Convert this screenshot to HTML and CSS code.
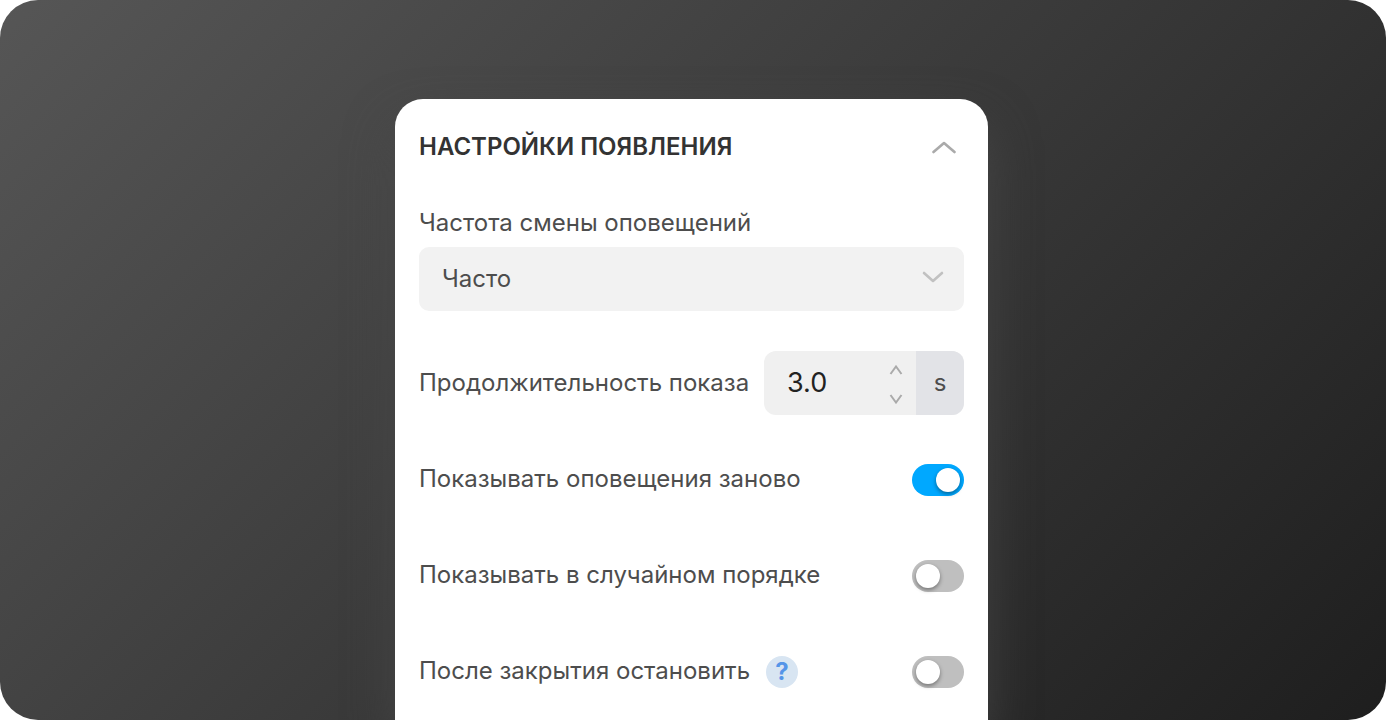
FILE: index.html
```html
<!DOCTYPE html>
<html lang="ru">
<head>
<meta charset="utf-8">
<title>Настройки появления</title>
<link rel="stylesheet" href="styles.css">
</head>
<body>
<main class="stage">
  <form class="card">
    <header class="card-header">
      <h1 class="title">НАСТРОЙКИ ПОЯВЛЕНИЯ</h1>
      <button class="collapse" type="button" aria-label="Свернуть">
        <svg width="24" height="14" viewBox="0 0 24 14"><path d="M1.500 12 12 3 22.500 12"/></svg>
      </button>
    </header>
    <div class="field">
      <label class="label" for="frequency">Частота смены оповещений</label>
      <div class="select-wrap">
        <select class="select" id="frequency"><option>Часто</option></select>
        <svg class="select-arrow" width="22" height="12" viewBox="0 0 22 12"><path d="M2 2 11 10 20 2"/></svg>
      </div>
    </div>
    <div class="row">
      <label class="label" for="duration">Продолжительность показа</label>
      <div class="number">
        <input class="number-input" id="duration" type="text" inputmode="decimal" value="3.0">
        <div class="steppers">
          <button class="step" type="button" aria-label="Больше"><svg width="14" height="10" viewBox="0 0 14 10"><path d="M1.500 9 7 1.500 12.500 9"/></svg></button>
          <button class="step" type="button" aria-label="Меньше"><svg width="14" height="10" viewBox="0 0 14 10"><path d="M1.500 1 7 8.500 12.500 1"/></svg></button>
        </div>
        <span class="unit">s</span>
      </div>
    </div>
    <div class="row">
      <label class="label" for="repeat">Показывать оповещения заново</label>
      <input class="switch" id="repeat" type="checkbox" checked>
    </div>
    <div class="row">
      <label class="label" for="random">Показывать в случайном порядке</label>
      <input class="switch" id="random" type="checkbox">
    </div>
    <div class="row">
      <div class="label-group">
        <label class="label" for="stop">После закрытия остановить</label>
        <button class="help" type="button">?</button>
      </div>
      <input class="switch" id="stop" type="checkbox">
    </div>
  </form>
</main>
</body>
</html>
```
FILE: styles.css
```css
* {
  box-sizing: border-box;
}

body {
  margin: 0;
  background: #fff;
  color: #4d4d4d;
  font-family: Inter, "Liberation Sans", sans-serif;
  font-size: 24px;
  line-height: 32px;
}

button,
input,
select {
  margin: 0;
  padding: 0;
  border: 0;
  background: none;
  color: inherit;
  font: inherit;
}

svg {
  display: block;
  fill: none;
  stroke: #aaa;
  stroke-width: 2.6;
  stroke-linecap: round;
  stroke-linejoin: round;
}

.stage {
  display: grid;
  grid-template-columns: 395fr minmax(auto, 593px) 398fr;
  min-height: 100vh;
  padding-top: 99px;
  border-radius: 38px;
  background: linear-gradient(135deg, #565656, #1e1e1e);
}

.card {
  grid-column: 2;
  display: flex;
  flex-direction: column;
  gap: 32px;
  padding: 24px 24px 16px;
  border-radius: 28px 28px 0 0;
  background: #fff;
  box-shadow: 0 24px 48px rgba(72, 72, 72, 0.8);
}

.card-header {
  display: flex;
  align-items: center;
  justify-content: space-between;
  height: 48px;
}

.title {
  margin: 0;
  color: #333;
  font-size: 24px;
  font-weight: 600;
}

.collapse {
  padding: 8px;
}

.field {
  display: flex;
  flex-direction: column;
  gap: 8px;
  padding: 4px 0 8px;
}

.select-wrap {
  position: relative;
}

.select {
  display: block;
  width: 100%;
  height: 64px;
  padding: 0 64px 0 23px;
  border-radius: 10px;
  background: #f2f2f2;
  appearance: none;
}

.select-arrow {
  position: absolute;
  top: 24px;
  right: 20px;
  stroke: #c1c1c1;
  pointer-events: none;
}

.row {
  display: flex;
  align-items: center;
  justify-content: space-between;
  height: 64px;
}

.number {
  display: flex;
  width: 200px;
  height: 64px;
  overflow: hidden;
  border-radius: 12px;
  background: #f0f0f0;
}

.number-input {
  flex: 1;
  min-width: 0;
  padding-left: 23px;
  color: #222;
  font-size: 27px;
}

.steppers {
  display: flex;
  flex-direction: column;
  justify-content: center;
  gap: 19px;
  padding: 2px 13px 0;
}

.step svg {
  stroke: #aaa;
  stroke-width: 2;
  stroke-linecap: butt;
  stroke-linejoin: miter;
}

.unit {
  display: grid;
  place-items: center;
  width: 48px;
  background: #e2e3e7;
}

.switch {
  display: flex;
  align-items: center;
  width: 52px;
  height: 32px;
  margin-top: 2px;
  padding: 0 4px;
  border-radius: 16px;
  background: #bfbfbf;
  appearance: none;
}

.switch::before {
  content: "";
  width: 24px;
  height: 24px;
  border-radius: 50%;
  background: #fff;
  box-shadow: 0 2px 4px rgba(0, 0, 0, 0.4);
}

.switch:checked {
  justify-content: flex-end;
  background: #00a8ff;
}

.label-group {
  display: flex;
  align-items: center;
  gap: 16px;
}

.help {
  width: 32px;
  height: 32px;
  margin-top: 2px;
  border-radius: 50%;
  background: #d8e5f2;
  color: #5595e8;
  font-weight: 700;
}
```
